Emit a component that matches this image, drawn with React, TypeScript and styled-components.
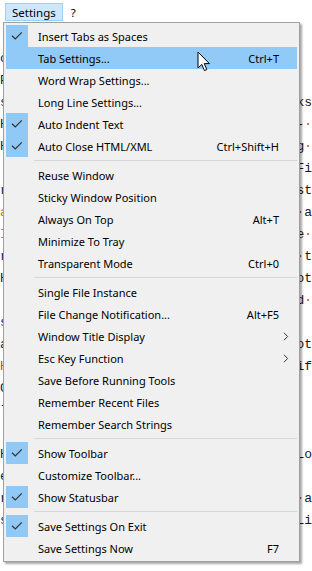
import React from "react";
import styled, { createGlobalStyle } from "styled-components";

const GlobalStyle = createGlobalStyle`
  html, body { margin: 0; padding: 0; background: #ffffff; overflow: hidden; }
  #root { width: 312px; height: 571px; }
`;

const Page = styled.div`
  position: relative;
  width: 312px;
  height: 571px;
  overflow: hidden;
  background: #ffffff;
  font-family: "Noto Sans", sans-serif;
`;

const MenuBar = styled.div`
  display: flex;
  align-items: center;
  height: 22px;
  padding: 0 0 0 5px;
  gap: 1px;
  background: #ffffff;
`;

const MenuBarItem = styled.div<{ $active?: boolean }>`
  display: flex;
  align-items: center;
  height: 16px;
  padding: 0 6px;
  margin-top: 2px;
  font-size: 11.5px;
  color: #000;
  background: ${(p) => (p.$active ? "#cce8ff" : "transparent")};
  border: 1px solid ${(p) => (p.$active ? "#99d1ff" : "transparent")};
`;

const Editor = styled.div`
  display: flex;
  flex-direction: column;
  padding-top: 3px;
  font-family: "Liberation Mono", monospace;
  font-size: 13px;
`;

const CodeLine = styled.div`
  display: flex;
  justify-content: space-between;
  align-items: center;
  height: 22px;
  white-space: pre;
  color: #1a1a1a;
`;

const LeftFrag = styled.span<{ $color?: string }>`
  color: ${(p) => p.$color || "#1a1a2e"};
`;

const RightFrag = styled.span`
  color: #1a1a1a;
`;

const Dot = styled.span`
  color: #e04020;
`;

const Popup = styled.div`
  position: absolute;
  left: 3px;
  top: 22px;
  width: 291px;
  padding: 2px;
  background: #f0f0f0;
  border: 1px solid #a0a0a0;
  box-shadow: 2px 2px 2px rgba(0, 0, 0, 0.35);
  display: flex;
  flex-direction: column;
`;

const Item = styled.div<{ $hover?: boolean }>`
  display: grid;
  grid-template-columns: 22px 1fr auto 18px;
  align-items: center;
  height: 22px;
  font-size: 11px;
  color: #000;
  background: ${(p) => (p.$hover ? "#91c9f7" : "transparent")};
`;

const CheckBox = styled.div<{ $checked?: boolean }>`
  width: 22px;
  height: 22px;
  display: flex;
  align-items: center;
  justify-content: center;
  background: ${(p) => (p.$checked ? "#90c8f6" : "transparent")};
`;

const Label = styled.span`
  padding-left: 10px;
  white-space: nowrap;
`;

const Shortcut = styled.span`
  white-space: nowrap;
  text-align: right;
`;

const ArrowCell = styled.span`
  display: flex;
  align-items: center;
  justify-content: flex-start;
  padding-left: 4px;
`;

const Separator = styled.div`
  height: 7px;
  display: flex;
  align-items: center;
  padding-left: 28px;
  &::after {
    content: "";
    flex: 1;
    height: 1px;
    background: #d7d7d7;
  }
`;

const Cursor = styled.svg`
  position: absolute;
  left: 197px;
  top: 51px;
`;

type Entry =
  | { sep: true }
  | { sep?: false; label: string; check?: boolean; shortcut?: string; sub?: boolean; hover?: boolean };

const entries: Entry[] = [
  { label: "Insert Tabs as Spaces", check: true },
  { label: "Tab Settings...", shortcut: "Ctrl+T", hover: true },
  { label: "Word Wrap Settings..." },
  { label: "Long Line Settings..." },
  { label: "Auto Indent Text", check: true },
  { label: "Auto Close HTML/XML", check: true, shortcut: "Ctrl+Shift+H" },
  { sep: true },
  { label: "Reuse Window" },
  { label: "Sticky Window Position" },
  { label: "Always On Top", shortcut: "Alt+T" },
  { label: "Minimize To Tray" },
  { label: "Transparent Mode", shortcut: "Ctrl+0" },
  { sep: true },
  { label: "Single File Instance" },
  { label: "File Change Notification...", shortcut: "Alt+F5" },
  { label: "Window Title Display", sub: true },
  { label: "Esc Key Function", sub: true },
  { label: "Save Before Running Tools" },
  { label: "Remember Recent Files" },
  { label: "Remember Search Strings" },
  { sep: true },
  { label: "Show Toolbar", check: true },
  { label: "Customize Toolbar..." },
  { label: "Show Statusbar", check: true },
  { sep: true },
  { label: "Save Settings On Exit", check: true },
  { label: "Save Settings Now", shortcut: "F7" },
];

const codeLines: { l: string; lc?: string; r: React.ReactNode }[] = [
  { l: " ", r: "" },
  { l: "o", r: "" },
  { l: "P", r: "" },
  { l: "s", r: "ks" },
  { l: "H", r: <>-<Dot>·</Dot></> },
  { l: "H", r: <>g<Dot>·</Dot></> },
  { l: " ", r: "Fi" },
  { l: "r", r: "st" },
  { l: "a", lc: "#c08000", r: <><Dot>·</Dot>a</> },
  { l: "I", lc: "#c08000", r: <>e<Dot>·</Dot></> },
  { l: "r", r: <><Dot>·</Dot>t</> },
  { l: "H", r: "ot" },
  { l: " ", r: <>d<Dot>·</Dot></> },
  { l: "s", r: "" },
  { l: "á", r: "ot" },
  { l: "H", lc: "#c05000", r: "if" },
  { l: "C", r: "" },
  { l: "l", r: "" },
  { l: " ", r: "" },
  { l: "H", r: "Lo" },
  { l: "e", r: "" },
  { l: "r", r: <><Dot>·</Dot>a</> },
  { l: "s", r: "Li" },
  { l: " ", r: "" },
  { l: " ", r: "" },
];

function Check() {
  return (
    <svg width="12" height="10" viewBox="0 0 12 10">
      <path d="M1 4.8 L4.3 8 L10.8 1.4" fill="none" stroke="#333333" strokeWidth="1.2" />
    </svg>
  );
}

function Chevron() {
  return (
    <svg width="6" height="9" viewBox="0 0 6 9">
      <path d="M1 0.8 L4.6 4.5 L1 8.2" fill="none" stroke="#333" strokeWidth="1" />
    </svg>
  );
}

export default function App() {
  return (
    <Page>
      <GlobalStyle />
      <MenuBar>
        <MenuBarItem $active>Settings</MenuBarItem>
        <MenuBarItem>?</MenuBarItem>
      </MenuBar>
      <Editor>
        {codeLines.map((c, i) => (
          <CodeLine key={i}>
            <LeftFrag $color={c.lc}>{c.l}</LeftFrag>
            <RightFrag>{c.r}</RightFrag>
          </CodeLine>
        ))}
      </Editor>
      <Popup>
        {entries.map((e, i) =>
          e.sep ? (
            <Separator key={i} />
          ) : (
            <Item key={i} $hover={e.hover}>
              <CheckBox $checked={e.check}>{e.check && <Check />}</CheckBox>
              <Label>{e.label}</Label>
              <Shortcut>{e.shortcut || ""}</Shortcut>
              <ArrowCell>{e.sub && <Chevron />}</ArrowCell>
            </Item>
          )
        )}
      </Popup>
      <Cursor width="14" height="22" viewBox="0 0 14 22">
        <path
          d="M1 1 L1 17 L4.8 13.4 L7.4 19.6 L9.8 18.6 L7.3 12.6 L12.4 12.6 Z"
          fill="#ffffff"
          stroke="#000000"
          strokeWidth="1"
          strokeLinejoin="miter"
        />
      </Cursor>
    </Page>
  );
}
